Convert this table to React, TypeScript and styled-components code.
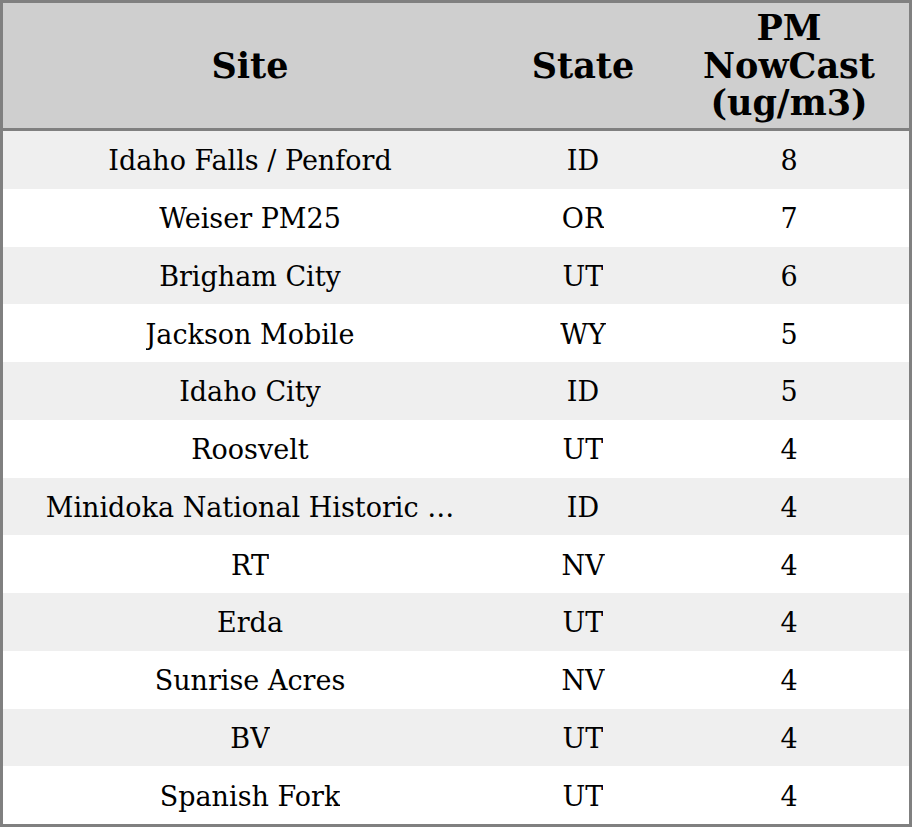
import React from "react";
import styled, { createGlobalStyle } from "styled-components";

const Global = createGlobalStyle`
  html, body { margin: 0; padding: 0; background: #fff; }
  body { font-family: "DejaVu Serif", serif; }
`;

const Table = styled.div`
  box-sizing: border-box;
  width: 912px;
  height: 827px;
  border: 3px solid #808080;
  display: grid;
  grid-template-columns: 494px 172px 1fr;
  grid-template-rows: 128px repeat(12, 1fr);
  font-family: "DejaVu Serif", serif;
  color: #000;
`;

const HeadCell = styled.div`
  background: #cfcfcf;
  border-bottom: 3px solid #808080;
  display: flex;
  align-items: center;
  justify-content: center;
  text-align: center;
  font-weight: bold;
  font-size: 35px;
  line-height: 37.5px;
`;

const Cell = styled.div<{ $odd: boolean }>`
  background: ${(p) => (p.$odd ? "#efefef" : "#ffffff")};
  display: flex;
  align-items: center;
  justify-content: center;
  font-size: 27px;
  padding: 2px 40px 0;
  min-width: 0;
`;

const Text = styled.span`
  white-space: nowrap;
  overflow: hidden;
  min-width: 0;
`;

const rows: [string, string, number][] = [
  ["Idaho Falls / Penford", "ID", 8],
  ["Weiser PM25", "OR", 7],
  ["Brigham City", "UT", 6],
  ["Jackson Mobile", "WY", 5],
  ["Idaho City", "ID", 5],
  ["Roosvelt", "UT", 4],
  ["Minidoka National Historic …", "ID", 4],
  ["RT", "NV", 4],
  ["Erda", "UT", 4],
  ["Sunrise Acres", "NV", 4],
  ["BV", "UT", 4],
  ["Spanish Fork", "UT", 4],
];

export default function App() {
  return (
    <>
      <Global />
      <Table>
        <HeadCell>Site</HeadCell>
        <HeadCell>State</HeadCell>
        <HeadCell>
          PM
          <br />
          NowCast
          <br />
          (ug/m3)
        </HeadCell>
        {rows.map(([site, st, v], i) => (
          <React.Fragment key={i}>
            <Cell $odd={i % 2 === 0}>
              <Text>{site}</Text>
            </Cell>
            <Cell $odd={i % 2 === 0}>
              <Text>{st}</Text>
            </Cell>
            <Cell $odd={i % 2 === 0}>
              <Text>{v}</Text>
            </Cell>
          </React.Fragment>
        ))}
      </Table>
    </>
  );
}
